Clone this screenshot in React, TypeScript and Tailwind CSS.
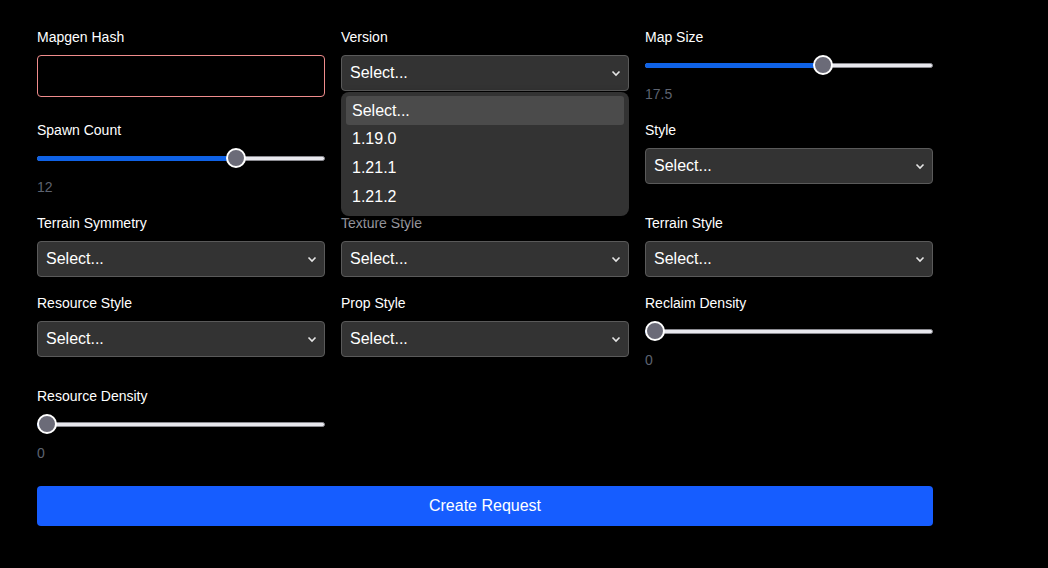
import React from "react";

const font = { fontFamily: '"Liberation Sans", Arial, sans-serif' };

function Label({ children, dim }: { children: React.ReactNode; dim?: boolean }) {
  return (
    <div className={`h-5 text-[14px] leading-5 ${dim ? "text-[#a9a9b0]" : "text-white"}`}>{children}</div>
  );
}

function Chevron() {
  return (
    <svg width="10" height="7" viewBox="0 0 10 7" className="shrink-0">
      <path d="M1.5 1.5 L5 5 L8.5 1.5" fill="none" stroke="#e5e5e5" strokeWidth="1.6" />
    </svg>
  );
}

function SelectBox() {
  return (
    <div className="mt-2 flex h-9 items-center justify-between rounded-[4px] border border-[#5a5a5a] bg-[#333333] pl-2 pr-[7px] text-[16px] text-white">
      <span>Select...</span>
      <Chevron />
    </div>
  );
}

function Slider({ pct, value }: { pct: number; value: string }) {
  return (
    <div>
      <div className="relative mt-2 h-5">
        <div className="absolute left-0 right-0 top-[8px] h-[5px] rounded-full border border-[#8a8a90] bg-[#e8e8ee]" />
        <div
          className="absolute left-0 top-[8px] h-[5px] rounded-full bg-[#0f62e6]"
          style={{ width: `calc(9px + (100% - 18px) * ${pct})` }}
        />
        <div
          className="absolute top-[0px] h-[20px] w-[20px] rounded-full border-2 border-white bg-[#6b6b78]"
          style={{ left: `calc((100% - 20px) * ${pct})` }}
        />
      </div>
      <div className="mt-[9px] h-5 text-[14px] leading-5 text-[#5d6370]">{value}</div>
    </div>
  );
}

function Field({ label, children, dim }: { label: string; children: React.ReactNode; dim?: boolean }) {
  return (
    <div className="flex flex-col">
      <Label dim={dim}>{label}</Label>
      {children}
    </div>
  );
}

export default function App() {
  return (
    <div className="min-h-[568px] w-full bg-black pl-[37px] pt-[27px]" style={font}>
      <div className="w-[896px]">
        <div className="grid grid-cols-3 items-start gap-x-4 gap-y-4">
          <Field label="Mapgen Hash">
            <div className="mt-2 h-[42px] rounded-[4px] border border-[#f08c8c] bg-black" />
          </Field>
          <div className="relative">
            <Field label="Version">
              <SelectBox />
            </Field>
            <div className="absolute left-0 right-0 top-[65px] z-10 rounded-[8px] bg-[#333333] px-[5px] pb-[5px] pt-[4px] text-[16px] text-white shadow-[0_4px_10px_rgba(0,0,0,0.6)]">
              <div className="flex h-[29px] items-center rounded-[3px] bg-[#4b4b4b] px-[6px]">Select...</div>
              <div className="flex h-[28.5px] items-center px-[6px]">1.19.0</div>
              <div className="flex h-[28.5px] items-center px-[6px]">1.21.1</div>
              <div className="flex h-[29px] items-center px-[6px]">1.21.2</div>
            </div>
          </div>
          <Field label="Map Size">
            <Slider pct={0.626} value="17.5" />
          </Field>

          <Field label="Spawn Count">
            <Slider pct={0.707} value="12" />
          </Field>
          <Field label="">
            <Slider pct={0.3} value="" />
          </Field>
          <Field label="Style">
            <SelectBox />
          </Field>

          <Field label="Terrain Symmetry">
            <SelectBox />
          </Field>
          <Field label="Texture Style" dim>
            <SelectBox />
          </Field>
          <Field label="Terrain Style">
            <SelectBox />
          </Field>

          <Field label="Resource Style">
            <SelectBox />
          </Field>
          <Field label="Prop Style">
            <SelectBox />
          </Field>
          <Field label="Reclaim Density">
            <Slider pct={0} value="0" />
          </Field>

          <Field label="Resource Density">
            <Slider pct={0} value="0" />
          </Field>
        </div>
        <button className="mt-[23px] flex h-10 w-full items-center justify-center rounded-[4px] bg-[#165dff] text-[16px] text-white">
          Create Request
        </button>
      </div>
    </div>
  );
}
